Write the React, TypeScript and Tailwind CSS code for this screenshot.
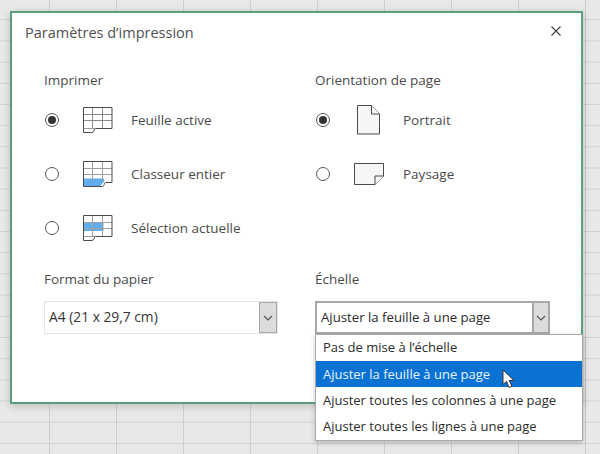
const font = "font-['Open_Sans','Noto_Sans',sans-serif]";

const SheetIcon = ({ variant }: { variant: "active" | "book" | "selection" }) => (
  <svg width="30" height="27" viewBox="0 0 30 27" fill="none" stroke="#4a4a4a" strokeWidth="1">
    {variant === "book" && <path d="M0.5 17.5H21V20.5L17 25.5H0.5Z" fill="#5faef0" stroke="none" />}
    {variant === "selection" && <rect x="0.5" y="8" width="20" height="8" fill="#5faef0" stroke="none" />}
    <path d="M9.5 0.5V21M19.5 0.5V21M0.5 7.5H29M0.5 13.5H29" stroke={variant === "active" ? "#8a8a8a" : "#a0a0a0"} />
    {variant === "book" ? (
      <path d="M0.5 0.5H29V21.5H22.5C21 21.5 21.5 25.5 19.5 25.5H0.5Z" />
    ) : (
      <path d="M0.5 0.5H29V21.5H12.5C11 21.5 11.5 25.5 9 25.5H0.5Z" />
    )}
    {variant !== "book" && <path d="M0.5 21.5H12" stroke="#9a9a9a" />}
  </svg>
);

const PortraitIcon = () => (
  <svg width="24" height="30" viewBox="0 0 24 30" fill="#f6f6f6" stroke="#4a4a4a" strokeWidth="1">
    <path d="M0.5 0.5H14.5L22.5 9V29H0.5Z" />
    <path d="M14.5 0.5V9H22.5" />
  </svg>
);

const LandscapeIcon = () => (
  <svg width="31" height="23" viewBox="0 0 31 23" fill="#f6f6f6" stroke="#4a4a4a" strokeWidth="1">
    <path d="M0.5 0.5H29.5V13L21 21.5H0.5Z" />
    <path d="M21 21.5V13H29.5" />
  </svg>
);

const Radio = ({ checked }: { checked?: boolean }) => (
  <span className="flex h-[14px] w-[14px] shrink-0 items-center justify-center rounded-full border border-[#555555] bg-white">
    {checked && <span className="h-[8px] w-[8px] rounded-full bg-[#333333]" />}
  </span>
);

const Chevron = () => (
  <svg width="10" height="6" viewBox="0 0 10 6" fill="none" stroke="#555555" strokeWidth="1.2">
    <path d="M1 1L5 5L9 1" />
  </svg>
);

const OptionRow = ({ checked, icon, label, iconBox }: { checked?: boolean; icon: React.ReactNode; label: string; iconBox: string }) => (
  <div className="flex h-[54px] items-center pl-px">
    <Radio checked={checked} />
    <div className={iconBox}>{icon}</div>
    <span className="text-[13.5px] text-[#4a4a4a]">{label}</span>
  </div>
);

const menuItems = [
  "Pas de mise à l’échelle",
  "Ajuster la feuille à une page",
  "Ajuster toutes les colonnes à une page",
  "Ajuster toutes les lignes à une page",
];

export default function App() {
  return (
    <div
      className={`${font} h-[454px] w-[600px] overflow-hidden bg-[#e8e8e7] bg-[linear-gradient(to_right,#cdcecd_1px,transparent_1px),linear-gradient(to_bottom,#d0d1d0_1px,transparent_1px)] bg-[size:67px_21.2px] bg-[position:-18px_-2px] pl-[10px] pt-[11px]`}
    >
      <div className="h-[393px] w-[573px] border-2 border-[#5a9f7b] bg-white shadow-[0_2px_8px_rgba(0,0,0,0.18)]">
        <div className="flex h-[40px] items-center justify-between pl-[13px] pr-[20px]">
          <h1 className="text-[14.5px] font-normal text-[#505050]">Paramètres d’impression</h1>
          <svg className="-mt-[4px]" width="10" height="10" viewBox="0 0 10 10" stroke="#444444" strokeWidth="1.2">
            <path d="M0.5 0.5L9.5 9.5M9.5 0.5L0.5 9.5" />
          </svg>
        </div>

        <div className="grid grid-cols-[271px_235px] pl-[32px] pt-[17px]">
          <div>
            <div className="mb-[3px] flex h-[20px] items-center text-[13.5px] text-[#4a4a4a]">Imprimer</div>
            <OptionRow checked label="Feuille active" iconBox="ml-[24px] mr-[18px] flex" icon={<SheetIcon variant="active" />} />
            <OptionRow label="Classeur entier" iconBox="ml-[24px] mr-[18px] flex" icon={<SheetIcon variant="book" />} />
            <OptionRow label="Sélection actuelle" iconBox="ml-[24px] mr-[18px] flex" icon={<SheetIcon variant="selection" />} />
          </div>

          <div>
            <div className="mb-[3px] flex h-[20px] items-center text-[13.5px] text-[#4a4a4a]">Orientation de page</div>
            <OptionRow checked label="Portrait" iconBox="ml-[27px] mr-[22px] flex" icon={<PortraitIcon />} />
            <OptionRow label="Paysage" iconBox="ml-[24px] mr-[18px] flex" icon={<LandscapeIcon />} />
          </div>

          <div className="pt-[14px]">
            <div className="mb-[12px] flex h-[20px] items-center text-[13.5px] text-[#4a4a4a]">Format du papier</div>
            <div className="flex h-[33px] w-[234px] items-stretch border border-[#e4e4e4] bg-white">
              <span className="flex flex-1 items-center pl-[4px] text-[13.8px] text-[#333333]">A4 (21 x 29,7 cm)</span>
              <span className="flex w-[18px] items-center justify-center border border-[#a8a8a8] bg-[#dcdcdc]">
                <Chevron />
              </span>
            </div>
          </div>

          <div className="pt-[14px]">
            <div className="mb-[12px] flex h-[20px] items-center text-[13.5px] text-[#4a4a4a]">Échelle</div>
            <div className="relative h-[33px] w-[235px]">
              <div className="flex h-full items-stretch border-2 border-r-0 border-[#a8a8a8] bg-white">
                <span className="flex flex-1 items-center pl-[4px] text-[13.2px] text-[#2b2b2b]">Ajuster la feuille à une page</span>
                <span className="flex w-[18px] items-center justify-center border-x-2 border-[#a8a8a8] bg-[#dcdcdc]">
                  <Chevron />
                </span>
              </div>

              <ul className="absolute left-0 top-[33px] z-10 w-[268px] border border-[#a9a9a9] bg-white shadow-[0_2px_5px_rgba(0,0,0,0.2)]">
                {menuItems.map((item, i) => (
                  <li
                    key={item}
                    className={`flex h-[26.2px] items-center pl-[7px] text-[13px] ${i === 1 ? "bg-[#0a72d2] text-[#e8f2fb]" : "text-[#2b2b2b]"}`}
                  >
                    {item}
                  </li>
                ))}
              </ul>

              <svg className="absolute left-[187px] top-[68px] z-20" width="14" height="20" viewBox="0 0 14 20">
                <path d="M1 1V15.5L4.6 12.4L7 18.5L9.8 17.3L7.3 11.4H12Z" fill="white" stroke="#333333" strokeWidth="1" />
              </svg>
            </div>
          </div>
        </div>
      </div>
    </div>
  );
}
